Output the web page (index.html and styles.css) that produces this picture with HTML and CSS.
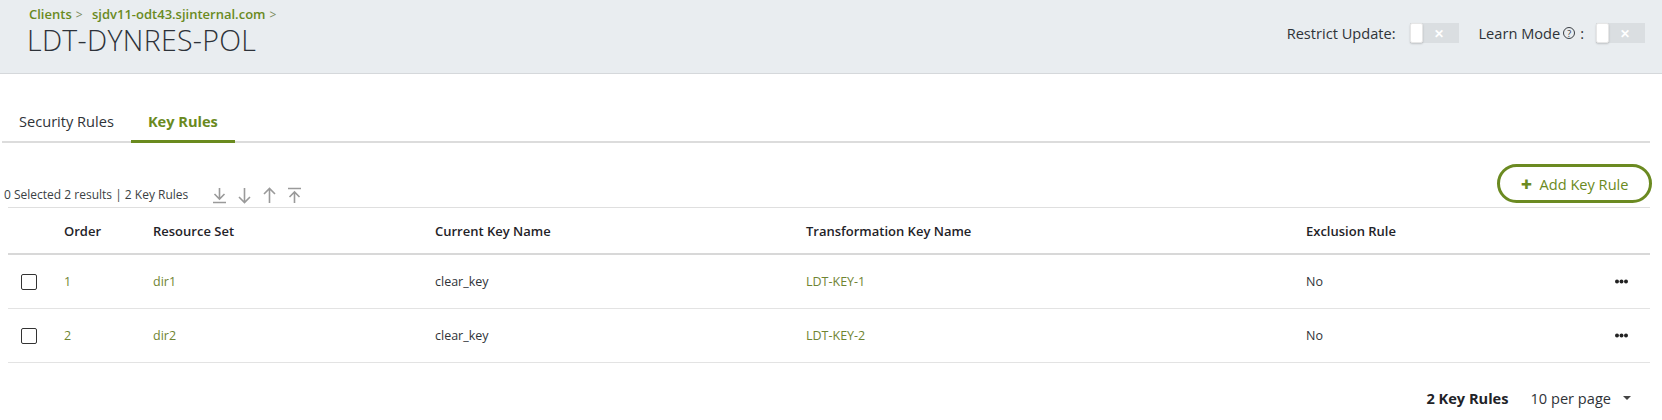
FILE: index.html
```html
<!DOCTYPE html>
<html>
<head>
<meta charset="utf-8">
<link rel="stylesheet" href="styles.css">
</head>
<body>
<header class="page-header">
  <div class="header-left">
    <nav class="breadcrumb">
      <a class="crumb">Clients</a><span class="crumb-sep">&gt;</span>
      <a class="crumb">sjdv11-odt43.sjinternal.com</a><span class="crumb-sep">&gt;</span>
    </nav>
    <h1 class="title">LDT-DYNRES-POL</h1>
  </div>
  <div class="header-right">
    <span class="toggle-label">Restrict Update:</span>
    <span class="toggle"><span class="knob"></span><span class="toggle-x">&#x2715;</span></span>
    <span class="toggle-label learn">Learn Mode<span class="help">?</span>:</span>
    <span class="toggle"><span class="knob"></span><span class="toggle-x">&#x2715;</span></span>
  </div>
</header>

<main class="content">
  <div class="tabs">
    <div class="tab">Security Rules</div>
    <div class="tab active">Key Rules</div>
  </div>

  <div class="toolbar">
    <div class="toolbar-left">
      <span class="count">0 Selected 2 results | 2 Key Rules</span>
      <div class="sort-icons">
        <svg width="15" height="17" viewBox="0 0 15 17"><path d="M7.5 1v11M2.5 7l5 5 5-5M1 15.5h13" fill="none" stroke="#9a9a9a" stroke-width="1.6"/></svg>
        <svg width="15" height="17" viewBox="0 0 15 17"><path d="M7.5 1v14.5M2 10l5.5 5.5 5.5-5.5" fill="none" stroke="#9a9a9a" stroke-width="1.6"/></svg>
        <svg width="15" height="17" viewBox="0 0 15 17"><path d="M7.5 16V1.5M2 7l5.5-5.5 5.5 5.5" fill="none" stroke="#9a9a9a" stroke-width="1.6"/></svg>
        <svg width="15" height="17" viewBox="0 0 15 17"><path d="M7.5 16V5M2.5 10l5-5 5 5M1 1.5h13" fill="none" stroke="#9a9a9a" stroke-width="1.6"/></svg>
      </div>
    </div>
    <button class="add-btn"><span class="plus">&#x271A;</span>Add Key Rule</button>
  </div>

  <div class="grid head">
    <div></div>
    <div>Order</div>
    <div>Resource Set</div>
    <div>Current Key Name</div>
    <div>Transformation Key Name</div>
    <div>Exclusion Rule</div>
    <div></div>
  </div>
  <div class="grid row">
    <div><span class="checkbox"></span></div>
    <div class="link">1</div>
    <div class="link">dir1</div>
    <div>clear_key</div>
    <div class="link">LDT-KEY-1</div>
    <div>No</div>
    <div class="more"><svg width="13" height="5" viewBox="0 0 13 5"><circle cx="2" cy="2.5" r="2"/><circle cx="6.5" cy="2.5" r="2"/><circle cx="11" cy="2.5" r="2"/></svg></div>
  </div>
  <div class="grid row">
    <div><span class="checkbox"></span></div>
    <div class="link">2</div>
    <div class="link">dir2</div>
    <div>clear_key</div>
    <div class="link">LDT-KEY-2</div>
    <div>No</div>
    <div class="more"><svg width="13" height="5" viewBox="0 0 13 5"><circle cx="2" cy="2.5" r="2"/><circle cx="6.5" cy="2.5" r="2"/><circle cx="11" cy="2.5" r="2"/></svg></div>
  </div>

  <div class="footer">
    <span class="total">2 Key Rules</span>
    <span class="per-page">10 per page <span class="caret"></span></span>
  </div>
</main>
</body>
</html>
```

FILE: styles.css
```css
* { box-sizing: border-box; }
body {
  margin: 0;
  font-family: "Open Sans", "Liberation Sans", sans-serif;
  color: #2f3338;
  background: #fff;
}
.page-header {
  height: 74px;
  background: #e9edf0;
  border-bottom: 1px solid #d5d8db;
  display: flex;
  justify-content: space-between;
  padding: 0 17px 0 29px;
}
.breadcrumb {
  margin-top: 5px;
  font-size: 13px;
  font-weight: 600;
  line-height: 18px;
  color: #6a8a1e;
}
.crumb { color: #6a8a1e; }
.crumb-sep { color: #7a8a5a; font-weight: 400; margin: 0 6px 0 4px; font-size: 12px; }
.title {
  margin: 0 0 0 -2px;
  font-size: 28.5px;
  font-weight: 300;
  line-height: 32px;
  color: #2d3239;
  letter-spacing: 0.3px;
}
.header-right {
  display: flex;
  align-items: center;
  height: 66px;
  font-size: 14.6px;
  color: #2f3338;
}
.toggle-label { margin-right: 14px; }
.toggle-label.learn { margin-left: 20px; margin-right: 12px; display: inline-flex; align-items: center; }
.help {
  display: inline-flex;
  align-items: center;
  justify-content: center;
  width: 12px;
  height: 12px;
  border: 1px solid #3a3f44;
  border-radius: 50%;
  font-size: 9px;
  line-height: 1;
  margin: 0 5px 0 3px;
}
.toggle {
  position: relative;
  display: inline-flex;
  align-items: center;
  justify-content: flex-end;
  width: 49px;
  height: 20px;
  background: #dadee1;
  padding-right: 15px;
}
.knob {
  position: absolute;
  left: 0;
  top: 0;
  width: 13px;
  height: 20px;
  background: #fff;
  border: 1px solid #e6e6e6;
  border-radius: 2px;
  box-shadow: 0 1px 2px rgba(0,0,0,0.18);
}
.toggle-x { color: #fff; font-size: 12px; font-weight: 700; }

.content { padding: 0 12px 0 8px; }
.tabs {
  display: flex;
  margin-top: 29px;
  margin-left: -6px;
  border-bottom: 2px solid #dcdcdc;
}
.tab {
  font-size: 14.6px;
  line-height: 20px;
  padding: 8px 17px 10px;
  color: #2f3338;
}
.tab.active {
  color: #6a8a1e;
  font-weight: 700;
  border-bottom: 3px solid #6a8a1e;
  margin-bottom: -2px;
  padding-bottom: 9px;
}
.toolbar {
  display: flex;
  justify-content: space-between;
  align-items: flex-end;
  margin-top: 21px;
  margin-left: -4px;
  margin-right: -2px;
  padding-bottom: 4px;
}
.toolbar-left { display: flex; align-items: flex-end; }
.count {
  font-size: 12px;
  line-height: 16px;
  color: #3a3f44;
}
.sort-icons { display: flex; gap: 10px; margin-left: 24px; margin-bottom: -1px; }
.add-btn {
  font-family: inherit;
  height: 39px;
  width: 155px;
  border: 3px solid #6b8a21;
  border-radius: 20px;
  background: #fff;
  color: #6b8a21;
  font-size: 14.6px;
  display: flex;
  align-items: center;
  justify-content: center;
  padding: 0 0 0 3px;
}
.plus { font-size: 13px; margin-right: 8px; margin-left: -3px; }

.grid {
  display: grid;
  grid-template-columns: 56px 89px 282px 371px 500px 1fr 50px;
  align-items: center;
}
.head {
  border-top: 1px solid #dfdfdf;
  border-bottom: 2px solid #d8d8d8;
  height: 48px;
  font-size: 13px;
  font-weight: 600;
  color: #1f2328;
}
.row {
  height: 54px;
  border-bottom: 1px solid #e3e3e3;
  font-size: 12.5px;
  color: #2f3338;
}
.checkbox {
  display: block;
  width: 16px;
  height: 16px;
  border: 1.5px solid #333;
  border-radius: 2px;
  margin-left: 13px;
}
.link { color: #6f8432; }
.more { display: flex; padding-left: 15px; fill: #222; }

.footer {
  display: flex;
  justify-content: flex-end;
  align-items: center;
  margin-top: 25px;
  padding-right: 19px;
  font-size: 14.6px;
}
.total { font-weight: 700; color: #1f2328; margin-right: 22px; }
.per-page { color: #2f3338; display: inline-flex; align-items: center; }
.caret {
  display: inline-block;
  margin-left: 12px;
  border-left: 4px solid transparent;
  border-right: 4px solid transparent;
  border-top: 4px solid #444;
}
```
